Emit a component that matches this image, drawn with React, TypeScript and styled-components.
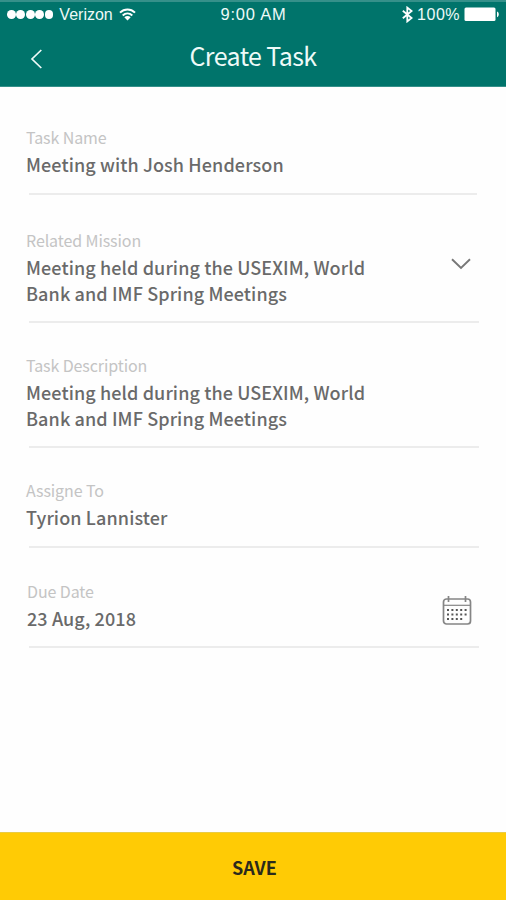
import React from 'react';
import styled, { createGlobalStyle } from 'styled-components';

const GlobalStyle = createGlobalStyle`
  * { box-sizing: border-box; }
  body { margin: 0; background: #fff; }
`;

const sourceSans = `'Noto Sans CJK SC', 'Noto Sans', sans-serif`;

const Screen = styled.main`
  display: flex;
  flex-direction: column;
  width: 506px;
  height: 900px;
  background: #fefefe;
  font-family: ${sourceSans};
`;

const Header = styled.header`
  height: 87px;
  background: #00746b;
  border-top: 2px solid #35908a;
  border-bottom: 1px solid #35908a;
  color: #eefaf8;
`;

const StatusBar = styled.div`
  display: grid;
  grid-template-columns: 1fr auto 1fr;
  align-items: center;
  height: 24px;
  padding: 1px 6px 0 7px;
  font: 16px/23px 'Liberation Sans', Arial, sans-serif;
`;

const StatusGroup = styled.div<{ $end?: boolean }>`
  display: flex;
  align-items: center;
  gap: ${(p) => (p.$end ? 4 : 6)}px;
  justify-content: ${(p) => (p.$end ? 'flex-end' : 'flex-start')};
`;

const StatusText = styled.span<{ $spacing?: number }>`
  letter-spacing: ${(p) => p.$spacing ?? 0}px;
  white-space: nowrap;
`;

const Clock = styled.time`
  font-size: 16.5px;
  letter-spacing: 0.8px;
`;

const Dots = styled.span`
  display: flex;
  gap: 0.6px;
`;

const Dot = styled.i`
  width: 8.8px;
  height: 8.8px;
  border-radius: 50%;
  background: #fff;
`;

const NavBar = styled.nav`
  display: grid;
  grid-template-columns: 60px 1fr 60px;
  align-items: center;
  height: 60px;
`;

const BackButton = styled.button`
  display: flex;
  padding: 6px 0 0 29px;
  border: 0;
  background: none;
  color: inherit;
`;

const Title = styled.h1`
  margin: 0 0 3px;
  text-align: center;
  font: 400 25px/36px ${sourceSans};
  letter-spacing: -0.6px;
`;

const Form = styled.form`
  flex: 1;
  padding: 7px 27px 0 26px;
`;

const Field = styled.div<{ $height: number; $top: number; $shift?: number; $line?: number }>`
  display: flex;
  justify-content: space-between;
  height: ${(p) => p.$height}px;
  padding: ${(p) => p.$top}px 0 0 ${(p) => p.$shift ?? 0}px;
  background: linear-gradient(#ececec, #ececec) 3px 100% / ${(p) => p.$line ?? 450}px 2px no-repeat;
`;

const Label = styled.label`
  display: block;
  height: 24px;
  font-size: 16px;
  line-height: 20px;
  color: #c4c4c4;
  letter-spacing: -0.1px;
`;

const Value = styled.div`
  font-size: 18px;
  line-height: 26px;
  font-weight: 500;
  color: #6a6a6a;
  letter-spacing: 0.11px;
  white-space: pre-line;
`;

const Adornment = styled.span<{ $top: number; $right: number }>`
  padding: ${(p) => p.$top}px ${(p) => p.$right}px 0 0;
  line-height: 0;
`;

const SaveButton = styled.button`
  height: 68px;
  padding: 1px 0 0 3px;
  border: 0;
  border-top: 1px solid #e9cb45;
  background: #ffcb05;
  color: #2b2a1c;
  font: 700 18px/24px ${sourceSans};
  letter-spacing: 0.1px;
`;

const WifiIcon = () => (
  <svg width="17" height="13" viewBox="0 0 17 13" fill="none" stroke="#fff" strokeWidth="2">
    <path d="M1 4.6C5.3.5 11.7.5 16 4.6M3.7 7.4c2.8-2.6 6.8-2.6 9.6 0" />
    <path d="M5.3 9.3c1.8-1.7 4.6-1.7 6.4 0L8.5 12.6z" fill="#fff" stroke="none" />
  </svg>
);

const BluetoothIcon = () => (
  <svg width="11" height="17" viewBox="0 0 11 17" fill="none" stroke="#fff" strokeWidth="1.8">
    <path d="M.8 4.8 9.6 12 5.3 15.4V1.6L9.6 5 .8 12.2" />
  </svg>
);

const BatteryIcon = () => (
  <svg width="36" height="15" viewBox="0 0 36 15" fill="#fff">
    <rect x="0.5" y="0.5" width="31" height="13.5" rx="1.5" />
    <path d="M33 4.5c2.4.7 2.4 5 0 5.7z" />
  </svg>
);

const ChevronLeft = () => (
  <svg width="14" height="20" viewBox="0 0 14 20" fill="none" stroke="#eefaf8" strokeWidth="1.7">
    <path d="M12.3 1 3 10l9.3 9" />
  </svg>
);

const ChevronDown = () => (
  <svg width="20" height="12" viewBox="0 0 20 12" fill="none" stroke="#777" strokeWidth="1.9">
    <path d="m1 1.2 9 8.8 9-8.8" />
  </svg>
);

const CalendarIcon = () => (
  <svg width="30" height="30" viewBox="0 0 30 30" fill="none" stroke="#858585">
    <rect x="1.5" y="3" width="27" height="25" rx="3" strokeWidth="1.7" />
    <path d="M2 9.3h26" strokeWidth="1.2" />
    <path d="M6.5 0v6M23.5 0v6" strokeWidth="1.7" />
    <g stroke="#555" strokeWidth="1.8" strokeDasharray="2 2.4">
      <path d="M5 14h20" />
      <path d="M5 18.5h20" />
      <path d="M5 23h16" />
    </g>
  </svg>
);

const meeting = 'Meeting held during the USEXIM, World\nBank and IMF Spring Meetings';

const fields = [
  { label: 'Task Name', value: 'Meeting with Josh Henderson', height: 101, top: 33, line: 448 },
  {
    label: 'Related Mission', value: meeting, height: 128, top: 35,
    end: <Adornment $top={28} $right={8}><ChevronDown /></Adornment>,
  },
  { label: 'Task Description', value: meeting, height: 125, top: 32 },
  { label: 'Assigne To', value: 'Tyrion Lannister', height: 100, top: 32 },
  {
    label: 'Due Date', value: '23 Aug, 2018', height: 100, top: 33, shift: 1,
    end: <Adornment $top={15} $right={7}><CalendarIcon /></Adornment>,
  },
];

export default function App() {
  return (
    <Screen>
      <GlobalStyle />
      <Header>
        <StatusBar>
          <StatusGroup>
            <Dots>{[0, 1, 2, 3, 4].map((i) => <Dot key={i} />)}</Dots>
            <StatusText>Verizon</StatusText>
            <WifiIcon />
          </StatusGroup>
          <Clock>9:00 AM</Clock>
          <StatusGroup $end>
            <BluetoothIcon />
            <StatusText $spacing={0.5}>100%</StatusText>
            <BatteryIcon />
          </StatusGroup>
        </StatusBar>
        <NavBar>
          <BackButton type="button" aria-label="Back"><ChevronLeft /></BackButton>
          <Title>Create Task</Title>
        </NavBar>
      </Header>
      <Form>
        {fields.map((f) => (
          <Field key={f.label} $height={f.height} $top={f.top} $shift={f.shift} $line={f.line}>
            <div>
              <Label>{f.label}</Label>
              <Value>{f.value}</Value>
            </div>
            {f.end}
          </Field>
        ))}
      </Form>
      <SaveButton type="button">SAVE</SaveButton>
    </Screen>
  );
}
